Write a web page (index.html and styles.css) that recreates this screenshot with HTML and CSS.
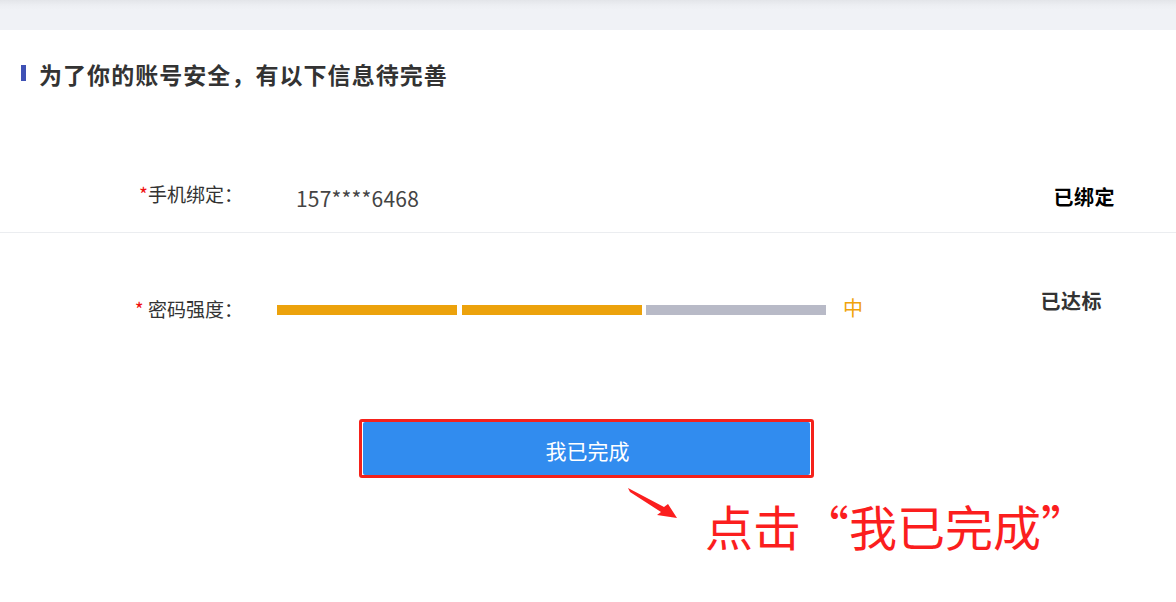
FILE: index.html
```html
<!DOCTYPE html>
<html lang="zh-CN">
<head>
<meta charset="utf-8">
<title>账号安全</title>
<link rel="stylesheet" href="styles.css">
</head>
<body>
<div class="topbar"></div>
<main class="panel">
  <h2 class="title">为了你的账号安全，有以下信息待完善</h2>

  <div class="row row-phone">
    <div class="label"><span class="req">*</span>手机绑定：</div>
    <div class="value phone">157****6468</div>
    <div class="status status-bound">已绑定</div>
  </div>

  <div class="row row-pwd">
    <div class="label"><span class="req">*</span> 密码强度：</div>
    <div class="value strength">
      <span class="bar on"></span>
      <span class="bar on"></span>
      <span class="bar"></span>
      <span class="level">中</span>
    </div>
    <div class="status status-ok">已达标</div>
  </div>

  <div class="actions">
    <div class="highlight">
      <button class="btn" type="button">我已完成</button>
    </div>
  </div>

  <div class="annotation">
    <svg class="arrow" width="60" height="45" viewBox="0 0 60 45">
      <polygon points="8,8 44,27 48,24 57,38 37,35 41,32 10,12" fill="#fb1e1e"/>
    </svg>
    <span class="note">点击“我已完成”</span>
  </div>
</main>
</body>
</html>
```

FILE: styles.css
```css
* { box-sizing: border-box; }

html, body {
  margin: 0;
  padding: 0;
  background: #ffffff;
  font-family: "Noto Sans CJK SC", "Noto Sans", "Liberation Sans", sans-serif;
  color: #333333;
}

.topbar {
  height: 30px;
  background: linear-gradient(to bottom, #e3e5e9 0px, #eceef2 5px, #f0f2f6 10px, #f0f2f6 100%);
}

.panel {
  background: #ffffff;
}

.title {
  margin: 28px 0 0 0;
  padding-left: 21px;
  font-size: 23px;
  line-height: 32px;
  font-weight: 700;
  color: #333333;
  letter-spacing: 1.05px;
  display: flex;
  align-items: center;
}

.title::before {
  content: "";
  display: block;
  width: 5px;
  height: 16px;
  background: #3f51b5;
  margin-right: 13px;
  margin-top: -2px;
}

.row {
  display: flex;
  align-items: center;
}

.row-phone {
  margin-top: 60px;
  height: 83px;
  border-bottom: 1px solid #ebedf0;
}

.row-pwd {
  height: 154px;
}

.label {
  width: 243px;
  text-align: right;
  font-size: 19px;
  line-height: 24px;
  color: #333333;
  flex: none;
}

.row-phone .label { margin-top: 6px; }
.row-pwd .label { margin-top: -2px; }

.req {
  color: #f01010;
}

.value {
  margin-left: 34px;
  flex: none;
}

.phone {
  padding-left: 19px;
  font-size: 21px;
  line-height: 28px;
  color: #444444;
  margin-top: 14px;
  letter-spacing: 0.2px;
}

.strength {
  display: flex;
  align-items: center;
  gap: 5px;
}

.bar {
  display: block;
  width: 180px;
  height: 10px;
  background: #b8bac7;
}

.bar:nth-child(2) { margin-right: -1px; }

.bar.on {
  background: #eca20c;
}

.level {
  margin-left: 12px;
  font-size: 20px;
  line-height: 24px;
  color: #f0a30a;
  margin-top: -4px;
}

.status {
  margin-left: auto;
  font-size: 20px;
  line-height: 26px;
  font-weight: 700;
  letter-spacing: 0.5px;
  flex: none;
}

.status-bound {
  color: #000000;
  margin-right: 61px;
  margin-top: 12px;
}

.status-ok {
  color: #333333;
  margin-right: 74px;
  margin-top: -18px;
}

.actions {
  display: flex;
  padding-left: 359px;
  margin-top: 32px;
}

.highlight {
  border: 3px solid #f5221b;
  border-radius: 3px;
  padding: 0 1px;
}

.btn {
  display: block;
  width: 447px;
  height: 53px;
  border: none;
  border-radius: 2px;
  background: #318cef;
  color: #ffffff;
  font-family: "Noto Sans CJK SC", "Noto Sans", sans-serif;
  font-size: 21px;
  padding: 2px 0 0 2px;
  cursor: pointer;
}

.annotation {
  display: flex;
  align-items: flex-start;
  margin-top: 2px;
}

.arrow {
  display: block;
  margin-left: 620px;
  flex: none;
}

.note {
  margin-left: 25px;
  margin-top: 18px;
  font-size: 48px;
  line-height: 54px;
  color: #fb1e1e;
  white-space: nowrap;
}
```
